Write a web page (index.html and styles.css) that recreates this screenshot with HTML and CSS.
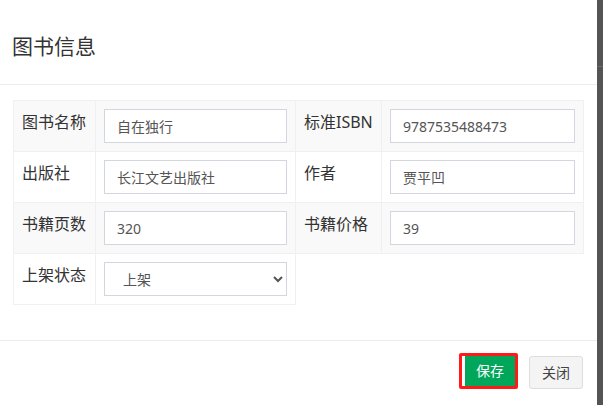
FILE: index.html
```html
<!DOCTYPE html>
<html lang="zh-CN">
<head>
<meta charset="utf-8">
<title>图书信息</title>
<link rel="stylesheet" href="styles.css">
</head>
<body>
<div class="page">
  <div class="modal">
    <div class="modal-header">
      <h4 class="modal-title">图书信息</h4>
    </div>
    <div class="modal-body">
      <table class="info">
        <colgroup>
          <col class="c-label1">
          <col class="c-field1">
          <col class="c-label2">
          <col class="c-field2">
        </colgroup>
        <tr class="odd">
          <td class="lbl">图书名称</td>
          <td class="fld"><input class="ctl" type="text" value="自在独行"></td>
          <td class="lbl">标准ISBN</td>
          <td class="fld"><input class="ctl" type="text" value="9787535488473"></td>
        </tr>
        <tr>
          <td class="lbl">出版社</td>
          <td class="fld"><input class="ctl" type="text" value="长江文艺出版社"></td>
          <td class="lbl">作者</td>
          <td class="fld"><input class="ctl" type="text" value="贾平凹"></td>
        </tr>
        <tr class="odd">
          <td class="lbl">书籍页数</td>
          <td class="fld"><input class="ctl" type="text" value="320"></td>
          <td class="lbl">书籍价格</td>
          <td class="fld"><input class="ctl" type="text" value="39"></td>
        </tr>
        <tr>
          <td class="lbl">上架状态</td>
          <td class="fld">
            <select class="ctl sel">
              <option selected>上架</option>
              <option>下架</option>
            </select>
          </td>
        </tr>
      </table>
    </div>
    <div class="modal-footer">
      <span class="mark"><button class="btn btn-save" type="button">保存</button></span>
      <button class="btn btn-close" type="button">关闭</button>
    </div>
  </div>
  <div class="strip"><span class="strip-line"></span></div>
</div>
</body>
</html>
```

FILE: styles.css
```css
html, body {
  margin: 0;
  padding: 0;
}

body {
  font-family: "Noto Sans", "Noto Sans CJK SC", sans-serif;
  color: #333;
  background: #555;
}

.page {
  display: flex;
  width: 603px;
  height: 405px;
  overflow: hidden;
}

.modal {
  width: 597px;
  height: 405px;
  background: #fff;
  flex: none;
}

.strip {
  flex: 1;
  background: #545454;
  display: flex;
  flex-direction: column;
  padding-top: 66px;
}

.strip-line {
  display: block;
  height: 1px;
  background: #6a6a6a;
}

.modal-header {
  padding: 32px 12px 23px;
  border-bottom: 1px solid #ececec;
}

.modal-title {
  margin: 0;
  font-size: 21px;
  font-weight: normal;
  line-height: 29px;
  color: #333;
}

.modal-body {
  padding: 15px 14px 35px 13px;
}

.info {
  width: 570px;
  table-layout: fixed;
  border-collapse: collapse;
}

.c-label1 { width: 82px; }
.c-field1 { width: 200px; }
.c-label2 { width: 86px; }
.c-field2 { width: 202px; }

.info td {
  border: 1px solid #f0f0f0;
  padding: 8px;
  vertical-align: top;
}

.info tr.odd td {
  background: #f9f9f9;
}

.lbl {
  font-size: 16px;
  line-height: 24px;
  color: #333;
  white-space: nowrap;
}

.info td.lbl {
  padding-top: 9px;
}

.ctl {
  display: block;
  box-sizing: border-box;
  width: 100%;
  height: 34px;
  margin: 0;
  padding: 6px 12px;
  border: 1px solid #d2d6de;
  border-radius: 0;
  background: #fff;
  font-family: "Noto Sans", "Noto Sans CJK SC", sans-serif;
  font-size: 14px;
  color: #555;
  outline: none;
}

.sel {
  padding: 6px 12px 6px 14px;
}

.modal-footer {
  border-top: 1px solid #ececec;
  padding: 12px 14px 0 13px;
  display: flex;
  justify-content: flex-end;
  align-items: flex-start;
}

.mark {
  display: inline-flex;
  border: 3px solid #ff1a1a;
  border-radius: 2px;
  padding-left: 3px;
  background: #fff;
}

.btn {
  font-family: "Noto Sans", "Noto Sans CJK SC", sans-serif;
  font-size: 14px;
  line-height: 20px;
  margin: 0;
  cursor: pointer;
}

.btn-save {
  width: 50px;
  height: 30px;
  padding: 0;
  border: none;
  border-radius: 0;
  background: #00a65a;
  color: #fff;
}

.btn-close {
  margin-left: 11px;
  margin-top: 3px;
  width: 54px;
  height: 33px;
  padding: 0;
  border: 1px solid #ddd;
  border-radius: 3px;
  background: #f4f4f4;
  color: #444;
}
```
